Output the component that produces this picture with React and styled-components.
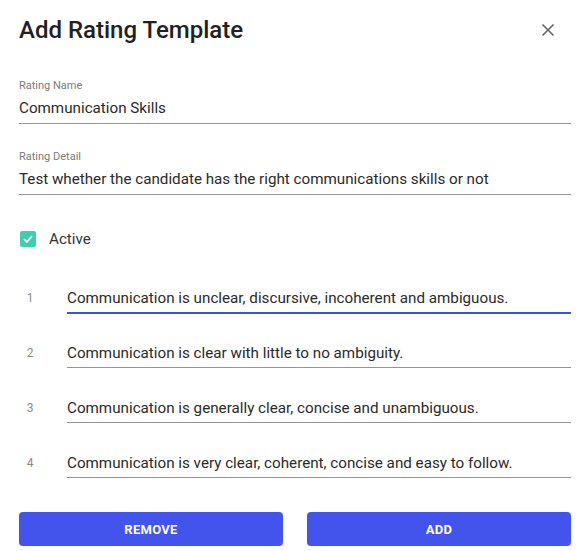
import styled, { createGlobalStyle } from "styled-components";

const GlobalStyle = createGlobalStyle`
  body {
    margin: 0;
    background: #ffffff;
    font-family: Roboto, "Liberation Sans", sans-serif;
  }
`;

const Dialog = styled.div`
  width: 583px;
  height: 551px;
  box-sizing: border-box;
  padding: 0 12px 0 19px;
  background: #ffffff;
  display: flex;
  flex-direction: column;
`;

const Header = styled.div`
  height: 60px;
  display: flex;
  align-items: center;
  justify-content: space-between;
`;

const Title = styled.h2`
  margin: 0;
  font-size: 24px;
  font-weight: 500;
  color: #212121;
`;

const CloseButton = styled.button`
  border: 0;
  background: none;
  padding: 0;
  margin-right: 11px;
  width: 24px;
  height: 24px;
  display: flex;
  align-items: center;
  justify-content: center;
  color: #666666;
  cursor: pointer;
`;

const Field = styled.div`
  margin-top: ${(p) => p.$top}px;
  display: flex;
  flex-direction: column;
  border-bottom: 1px solid #949494;
  padding-bottom: 5px;
`;

const Label = styled.label`
  font-size: 11px;
  line-height: 13px;
  color: #7a7a7a;
`;

const Value = styled.input`
  margin-top: 6px;
  border: 0;
  outline: none;
  padding: 0;
  font-family: inherit;
  font-size: 15.2px;
  line-height: 20px;
  height: 20px;
  color: #2a2a2a;
  background: transparent;
`;

const CheckRow = styled.div`
  margin-top: 35px;
  display: flex;
  align-items: center;
  gap: 13px;
  padding-left: 1px;
`;

const CheckBox = styled.span`
  width: 16px;
  height: 16px;
  border-radius: 2px;
  background: #3ecfb0;
  display: flex;
  align-items: center;
  justify-content: center;
`;

const CheckLabel = styled.span`
  font-size: 15.2px;
  color: #333333;
`;

const Levels = styled.div`
  margin-top: 41px;
  display: flex;
  flex-direction: column;
  gap: 30px;
`;

const LevelRow = styled.div`
  display: flex;
  align-items: flex-end;
`;

const LevelNumber = styled.span`
  width: 22px;
  text-align: center;
  font-size: 12px;
  color: #8a8a8a;
  padding-bottom: 8px;
`;

const LevelInput = styled.input`
  flex: 1;
  margin-left: 26px;
  border: 0;
  border-bottom: ${(p) => (p.$focused ? "2px solid #3f51d8" : "1px solid #949494")};
  margin-bottom: ${(p) => (p.$focused ? "-1px" : "0")};
  outline: none;
  padding: 0 0 5px;
  font-family: inherit;
  font-size: 15.2px;
  line-height: 20px;
  height: 25px;
  box-sizing: border-box;
  color: #2a2a2a;
  background: transparent;
`;

const Actions = styled.div`
  margin-top: 34px;
  display: grid;
  grid-template-columns: 1fr 1fr;
  gap: 24px;
`;

const ActionButton = styled.button`
  height: 34px;
  border: 0;
  border-radius: 4px;
  background: #4254ec;
  color: #ffffff;
  font-family: inherit;
  font-size: 13px;
  font-weight: 700;
  letter-spacing: 0.3px;
  text-transform: uppercase;
  cursor: pointer;
`;

const levels = [
  "Communication is unclear, discursive, incoherent and ambiguous.",
  "Communication is clear with little to no ambiguity.",
  "Communication is generally clear, concise and unambiguous.",
  "Communication is very clear, coherent, concise and easy to follow.",
];

export default function App() {
  return (
    <>
      <GlobalStyle />
      <Dialog>
        <Header>
          <Title>Add Rating Template</Title>
          <CloseButton aria-label="close">
            <svg width="14" height="14" viewBox="0 0 14 14">
              <path d="M1.5 1.5 L12.5 12.5 M12.5 1.5 L1.5 12.5" stroke="currentColor" strokeWidth="1.6" />
            </svg>
          </CloseButton>
        </Header>

        <Field $top={19}>
          <Label>Rating Name</Label>
          <Value readOnly value="Communication Skills" />
        </Field>

        <Field $top={26}>
          <Label>Rating Detail</Label>
          <Value readOnly value="Test whether the candidate has the right communications skills or not" />
        </Field>

        <CheckRow>
          <CheckBox>
            <svg width="12" height="12" viewBox="0 0 12 12">
              <path d="M2 6.2 L4.8 9 L10 3.2" fill="none" stroke="#fff" strokeWidth="1.8" />
            </svg>
          </CheckBox>
          <CheckLabel>Active</CheckLabel>
        </CheckRow>

        <Levels>
          {levels.map((text, i) => (
            <LevelRow key={i}>
              <LevelNumber>{i + 1}</LevelNumber>
              <LevelInput readOnly value={text} $focused={i === 0} />
            </LevelRow>
          ))}
        </Levels>

        <Actions>
          <ActionButton>Remove</ActionButton>
          <ActionButton>Add</ActionButton>
        </Actions>
      </Dialog>
    </>
  );
}
